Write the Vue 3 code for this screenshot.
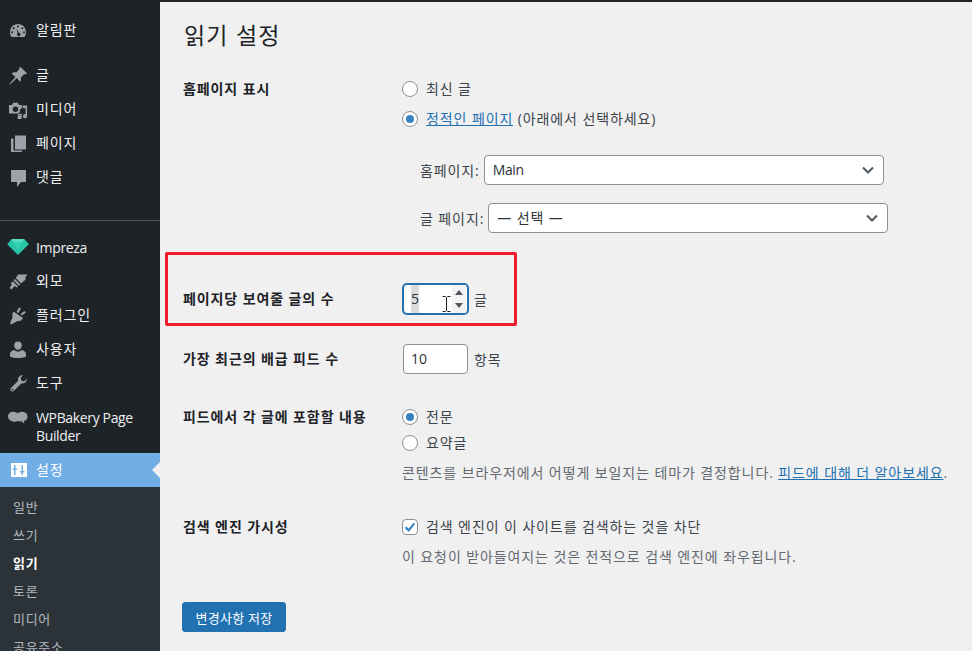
<script setup>
const topMenu = [
  { label: '글', icon: 'pin' },
  { label: '미디어', icon: 'media' },
  { label: '페이지', icon: 'page' },
  { label: '댓글', icon: 'comment' },
]
const lowerMenu = [
  { label: '외모', icon: 'brush' },
  { label: '플러그인', icon: 'plug' },
  { label: '사용자', icon: 'user' },
  { label: '도구', icon: 'wrench' },
]
const subMenu = ['일반', '쓰기', '읽기', '토론', '미디어', '공유주소']
const paths = {
  dash: 'M10 4C5.600 4 2 7.600 2 12c0 2 .6 3.700 1.500 5h13c.9-1.300 1.500-3 1.500-5 0-4.400-3.600-8-8-8zM10 5.500a1 1 0 1 1 0 2 1 1 0 0 1 0-2zM5.700 7.300a1 1 0 1 1 0 2 1 1 0 0 1 0-2zM14.300 7.300a1 1 0 1 1 0 2 1 1 0 0 1 0-2zM4 11.200a1 1 0 1 1 0 2 1 1 0 0 1 0-2zM16 11.200a1 1 0 1 1 0 2 1 1 0 0 1 0-2zM8.800 8.500l2 4.300a1.700 1.700 0 1 1-1.300.5z',
  pin: 'M12.500 2l6.500 6.300-1.400 1.300-1.300-.6-3.500 3.400c.5 1.700.2 3.200-.9 4.300L8.800 13 2 19.500l-.6-.6L7.300 12 3.700 8.400c1.100-1.100 2.800-1.500 4.500-.9l3.300-3.400-.6-.9z',
  media: 'M1 6h3l1.200-2.200h4.600L11 6h3v3.300c-1.300.1-2.100.9-2.100 2v1.900c-.7.200-1.300.7-1.500 1.300H1zM7.500 7.500a2.700 2.700 0 1 0 0 5.400 2.700 2.700 0 0 0 0-5.400zM14.800 6.500h3.700c.4 0 .6.3.6.6V17.200a2.100 2.100 0 1 1-1.500-2V9.300h-2.800zM9.200 15.400l4.500-1v3.900a2.100 2.100 0 1 1-1.400-1.900v-.4l-1.800.4z',
  page: 'M7 2.500h11v14H7zM5.500 5.500H3v13.500h11v-1.500H5.500z',
  comment: 'M4 3h13c.6 0 1 .4 1 1v10c0 .6-.4 1-1 1h-4l-4 5v-5H4c-.6 0-1-.4-1-1V4c0-.6.4-1 1-1z',
  brush: 'M10 3.500h9.500L17 7l1 1.200-5 4.300L7.800 7zM7 8l5.200 5.500-1.400 1.200L5.600 9.300zM4.800 10.200l5.200 5.300-1.400 1-2-1.500-3 3.500L1.500 17l2.300-3.300-1-1.200z',
  plug: 'M11 2.500l2 1-2.500 4.500-2-1zM16.500 6l1.500 1.500-4 3-1.500-1.500zM5.500 6.500L15 13c-1 2.500-3.500 3.500-5.500 3L3 19.500l-1-1 2.500-6c-.5-2.500 0-4.500 1-6z',
  user: 'M10 2.500a3.800 3.800 0 0 1 3.800 3.800c0 2.400-1.600 4.500-3.800 4.500S6.200 8.700 6.200 6.300A3.800 3.800 0 0 1 10 2.500zM6.500 11c1 1 2.200 1.500 3.500 1.500s2.500-.5 3.500-1.500c2.600.4 4.500 2 4.500 4v2.500C16 18.500 13 19 10 19s-6-.5-8-1.500V15c0-2 1.900-3.600 4.500-4z',
  wrench: 'M15 2.300c-2.500-.6-5 1.400-5 4 0 .5.100 1 .2 1.400L3 15c-.9.900-.9 2.100 0 2.900.8.800 2 .8 2.900-.1l7.700-7.500c2.900.9 5.400-1.400 5.100-4.500L16 8.400l-2.700-.9-.8-2.600zM4.500 15.700a.9.9 0 1 1 0 1.800.9.900 0 0 1 0-1.800z',
}
</script>

<template>
  <div class="page">
    <aside class="sidebar">
      <nav class="menu first">
        <a class="item"><svg class="ico" viewBox="0 0 20 20"><path fill-rule="evenodd" :d="paths.dash" /></svg><span>알림판</span></a>
      </nav>
      <nav class="menu group">
        <a v-for="m in topMenu" :key="m.label" class="item">
          <svg class="ico" viewBox="0 0 20 20"><path fill-rule="evenodd" :d="paths[m.icon]" /></svg><span>{{ m.label }}</span>
        </a>
      </nav>
      <div class="rule"></div>
      <nav class="menu">
        <a class="item">
          <svg class="gem" viewBox="0 0 24 20">
            <path d="M5 1h14l5 6-12 12L0 7z" fill="#27c6a6" />
            <path d="M5 1h14l-2 4H7z" fill="#53dcc2" />
            <path d="M7 5h10l-5 9z" fill="#33d2b2" />
          </svg>
          <span class="latin brand">Impreza</span>
        </a>
        <a v-for="m in lowerMenu" :key="m.label" class="item">
          <svg class="ico" viewBox="0 0 20 20"><path fill-rule="evenodd" :d="paths[m.icon]" /></svg>
          <span>{{ m.label }}</span>
        </a>
        <a class="item tall">
          <svg class="ico" viewBox="0 0 22 22"><path d="M6 3c2 0 3.500.8 4.500 2 1.200-1.200 3-2 5-2 3.500 0 6 2.400 6 5.200 0 2.500-1.600 4.500-4 5l.4 2.800-3.400-2.400c-1 .2-2.600.2-4-.3-1 .5-2.800.9-4.200.7C2.800 13.500 0 11 0 8.200 0 5.300 2.600 3 6 3z" /></svg>
          <span class="latin wrap">WPBakery Page Builder</span>
        </a>
        <a class="item active">
          <svg class="ico" viewBox="0 0 20 20"><path fill="#fff" fill-rule="evenodd" d="M3 3h16v14H3zM6 5v3.500H4.500v1.500H6v5h1.500v-5H9V8.500H7.500V5zM13.500 5v6H12v1.500h1.500V15H15v-2.500h1.500V11H15V5z" /></svg>
          <span>설정</span>
        </a>
      </nav>
      <ul class="sub">
        <li v-for="s in subMenu" :key="s" :class="{ current: s === '읽기' }">{{ s }}</li>
      </ul>
    </aside>

    <main class="content">
      <h1>읽기 설정</h1>

      <section class="row home">
        <div class="label">홈페이지 표시</div>
        <div class="field">
          <label class="radio"><i class="rd"></i>최신 글</label>
          <label class="radio"><i class="rd on"></i><span><a class="link">정적인 페이지</a> (아래에서 선택하세요)</span></label>
          <div class="pick first-pick">
            <span>홈페이지:</span>
            <div class="select"><span class="latin">Main</span><svg viewBox="0 0 20 20"><path d="M5 7.500l5 5 5-5" /></svg></div>
          </div>
          <div class="pick">
            <span>글 페이지:</span>
            <div class="select"><span>— 선택 —</span><svg viewBox="0 0 20 20"><path d="M5 7.500l5 5 5-5" /></svg></div>
          </div>
        </div>
      </section>

      <section class="row per-page">
        <div class="label">페이지당 보여줄 글의 수</div>
        <div class="field inline">
          <div class="num focus">
            <span class="sel">5</span>
            <span class="spin"><b class="up"></b><b class="down"></b></span>
            <svg class="beam" viewBox="0 0 9 16"><path d="M.5.500h3l1 1 1-1h3M4.500 1.500v13M.5 15.500h3l1-1 1 1h3" /></svg>
          </div>
          <span>글</span>
        </div>
        <div class="callout"></div>
      </section>

      <section class="row feed">
        <div class="label">가장 최근의 배급 피드 수</div>
        <div class="field inline">
          <div class="num">10</div>
          <span>항목</span>
        </div>
      </section>

      <section class="row content-row">
        <div class="label">피드에서 각 글에 포함할 내용</div>
        <div class="field">
          <label class="radio"><i class="rd on"></i>전문</label>
          <label class="radio"><i class="rd"></i>요약글</label>
          <p class="desc">콘텐츠를 브라우저에서 어떻게 보일지는 테마가 결정합니다. <a class="link">피드에 대해 더 알아보세요</a>.</p>
        </div>
      </section>

      <section class="row search">
        <div class="label">검색 엔진 가시성</div>
        <div class="field">
          <label class="check"><i class="cb"><svg viewBox="0 0 16 16"><path d="M3 8.200l3.400 3.600L13 3.800" /></svg></i>검색 엔진이 이 사이트를 검색하는 것을 차단</label>
          <p class="desc">이 요청이 받아들여지는 것은 전적으로 검색 엔진에 좌우됩니다.</p>
        </div>
      </section>

      <button class="save">변경사항 저장</button>
    </main>
  </div>
</template>

<style>
html, body { margin: 0; height: 100%; overflow: hidden; background: #f0f0f1; }
</style>

<style scoped>
.page {
  display: flex;
  width: 972px;
  height: 651px;
  overflow: hidden;
  background: #f0f0f1;
  color: #3c434a;
  font-family: "Open Sans", "Noto Sans CJK KR", sans-serif;
  font-size: 14px;
  letter-spacing: 0.9px;
}
.latin { letter-spacing: -0.35px; }
.sidebar {
  width: 160px;
  flex: none;
  height: 651px;
  overflow: hidden;
  background: #1d2327;
  color: #f0f0f1;
}
.menu { display: flex; flex-direction: column; }
.first { padding-top: 13px; }
.group { padding-top: 11px; }
.item {
  display: flex;
  align-items: center;
  height: 34px;
  padding-left: 8px;
  line-height: 18px;
}
.item > span { margin-left: 8px; }
.brand { padding-top: 2px; }
.ico { width: 20px; height: 20px; flex: none; fill: #9ca2a7; }
.gem { width: 22px; height: 18px; flex: none; margin-left: -1px; margin-right: -1px; }
.tall { height: 53px; }
.tall .ico { align-self: flex-start; margin-top: 9px; }
.wrap { width: 104px; }
.rule { height: 1px; margin: 26px 0 9px; background: #50555a; }
.active {
  position: relative;
  background: #72aee6;
  color: #fff;
}
.active::after {
  content: "";
  position: absolute;
  right: 0;
  top: 9px;
  border: 8px solid transparent;
  border-right-color: #f0f0f1;
  border-left-width: 0;
}
.sub {
  list-style: none;
  margin: 0;
  padding: 6px 0 0;
  background: #2c3338;
  color: rgba(240, 246, 252, 0.7);
  font-size: 13px;
  letter-spacing: 0.7px;
  height: 200px;
}
.sub li { height: 28px; line-height: 28px; padding-left: 13px; }
.sub .current { color: #fff; font-weight: 700; }

.content {
  flex: 1;
  min-width: 0;
  padding-left: 22px;
  border-top: 2px solid #1d2327;
}
h1 {
  margin: 0;
  padding: 17px 0 0 2px;
  height: 50px;
  box-sizing: border-box;
  font-size: 23px;
  font-weight: 400;
  line-height: 33px;
  letter-spacing: 1.2px;
  color: #1d2327;
}
.row { position: relative; display: flex; }
.label {
  width: 220px;
  flex: none;
  padding-left: 1px;
  box-sizing: border-box;
  font-weight: 600;
  color: #1d2327;
  line-height: 20px;
}
.field { min-width: 0; }
.home { height: 205px; padding-top: 27px; box-sizing: border-box; }
.radio, .check { display: flex; align-items: center; line-height: 20px; height: 20px; }
.radio + .radio { margin-top: 10px; }
.rd {
  position: relative;
  flex: none;
  width: 16px;
  height: 16px;
  box-sizing: border-box;
  margin-right: 8px;
  border: 1px solid #8c8f94;
  border-radius: 50%;
  background: #fff;
}
.rd.on::after {
  content: "";
  position: absolute;
  inset: 3px;
  border-radius: 50%;
  background: #3582c4;
}
.link { color: #2271b1; text-decoration: underline; }
.pick { display: flex; align-items: center; margin: 18px 0 0 18px; }
.first-pick { margin-top: 26px; }
.pick > span { margin-right: 4px; }
.select {
  display: flex;
  align-items: center;
  justify-content: space-between;
  width: 400px;
  height: 30px;
  box-sizing: border-box;
  padding: 0 5px 0 8px;
  border: 1px solid #8c8f94;
  border-radius: 4px;
  background: #fff;
  color: #2c3338;
}
.select > span { margin-top: -2px; }
.select svg { width: 20px; height: 20px; fill: none; stroke: #50575e; stroke-width: 2; }
.per-page { height: 84px; align-items: center; }
.inline { display: flex; align-items: center; gap: 6px; }
.num {
  position: relative;
  width: 65px;
  height: 30px;
  margin-left: 1px;
  box-sizing: border-box;
  padding-left: 7px;
  border: 1px solid #8c8f94;
  border-radius: 4px;
  background: #fff;
  line-height: 28px;
  color: #2c3338;
  letter-spacing: 0;
}
.num.focus { border-color: #2271b1; box-shadow: 0 0 0 1px #2271b1; }
.sel { display: block; width: 8px; height: 28px; background: #dcdcde; }
.spin {
  position: absolute;
  right: 1px;
  top: 0;
  bottom: 0;
  width: 14px;
  display: flex;
  flex-direction: column;
  align-items: center;
  justify-content: center;
  gap: 8px;
  background: #f3f3f3;
}
.up, .down {
  width: 0;
  height: 0;
  border: 4px solid transparent;
  border-top-width: 0;
  border-bottom: 5px solid #50575e;
}
.down { transform: rotate(180deg); }
.beam {
  position: absolute;
  left: 38px;
  top: 11px;
  width: 9px;
  height: 16px;
  fill: none;
  stroke: #1d2327;
  stroke-width: 1;
}
.callout {
  position: absolute;
  left: -17px;
  top: -5px;
  width: 352px;
  height: 74px;
  box-sizing: border-box;
  border: 3px solid #ee1c2e;
  border-radius: 2px;
  pointer-events: none;
}
.feed { height: 66px; padding-top: 3px; box-sizing: border-box; }
.feed .label { padding-top: 5px; }
.feed .inline { align-self: flex-start; }
.content-row { height: 110px; }
.content-row .radio + .radio { margin-top: 6px; }
.desc { margin: 10px 0 0; color: #646970; line-height: 20px; white-space: nowrap; }
.search { height: 85px; }
.cb {
  flex: none;
  width: 16px;
  height: 16px;
  box-sizing: border-box;
  margin-right: 8px;
  border: 1px solid #8c8f94;
  border-radius: 4px;
  background: #fff;
}
.cb svg { display: block; width: 14px; height: 14px; fill: none; stroke: #3582c4; stroke-width: 2.4; }
.save {
  display: block;
  width: 104px;
  height: 30px;
  padding: 0;
  border: 1px solid #2271b1;
  border-radius: 3px;
  background: #2271b1;
  color: #fff;
  font: inherit;
  font-size: 13px;
  letter-spacing: 0.3px;
}
</style>
